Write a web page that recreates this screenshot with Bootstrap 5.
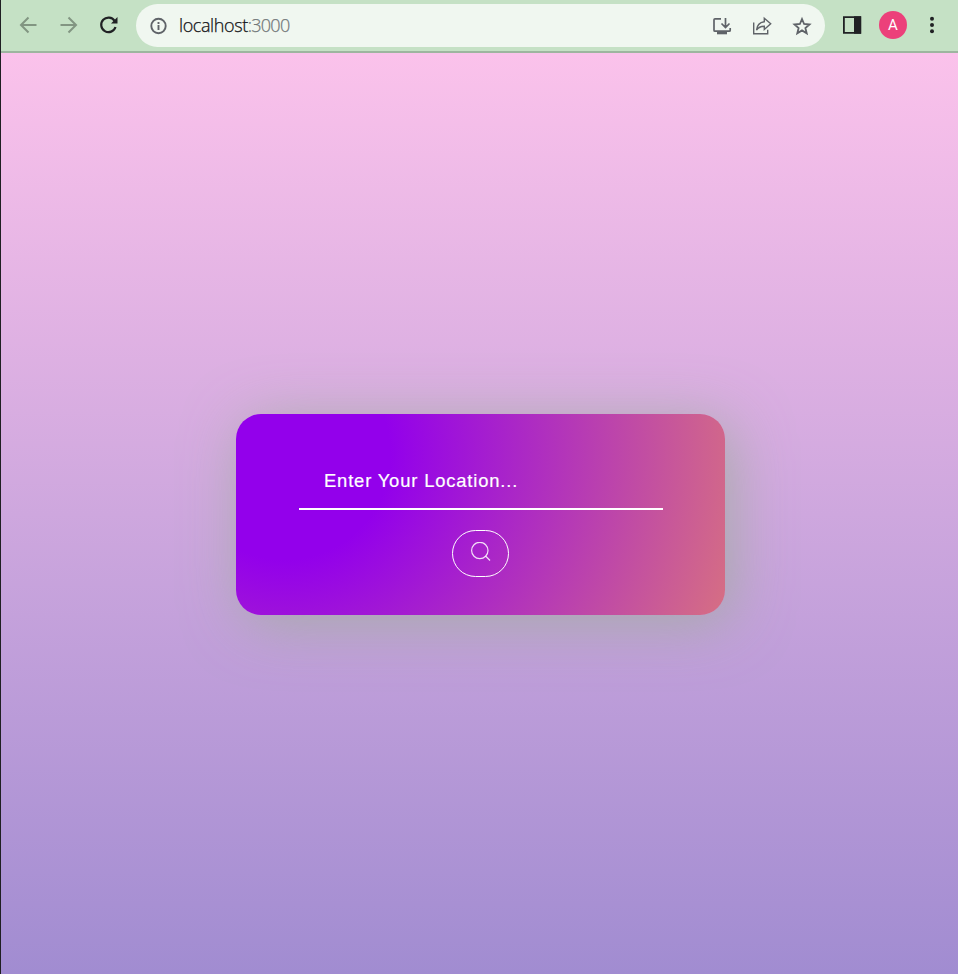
<!DOCTYPE html>
<html lang="en">
<head>
<meta charset="utf-8">
<meta name="viewport" content="width=device-width, initial-scale=1">
<title>Weather</title>
<link href="https://cdn.jsdelivr.net/npm/bootstrap@5.3.0/dist/css/bootstrap.min.css" rel="stylesheet">
<style>
body { border-left: 1px solid #1f1f22; background: #a18cd1; }
.toolbar { height: 53px; flex: none; background: #c5e1c5; border-bottom: 2px solid #9db59f; padding: 3px 14px 4px 15px; }
.tool { width: 24px; height: 24px; flex: none; display: block; }
.tool-gap { gap: 16px; }
.omnibox { height: 43px; margin: 1px 15px 0 16px; padding: 0 11px; background: #f0f7f0; border-radius: 22px; }
.address { font: 300 18px/24px "Open Sans", sans-serif; letter-spacing: -.4px; color: #101114; margin-left: 8px; margin-top: -1px; -webkit-text-stroke: .25px; }
.address span { color: #72777a; letter-spacing: -.75px; }
.avatar { width: 28px; height: 28px; background: #ec407a; font: 15px Roboto, sans-serif; margin-left: 15px; margin-right: 13px; }
.page { background: linear-gradient(to top, #a18cd1 0%, #fbc2eb 100%); }
.search-box { width: 489px; height: 201px; padding: 36px 62px 0 63px; border-radius: 25px; margin-left: 2px; margin-top: 2px;
  background: radial-gradient(circle at 10% 20%, #9300eb 22.5%, #d66f83 100%);
  box-shadow: 7px 8px 57px rgba(154, 174, 150, .74); }
.location { height: 60px; padding: 3px 25px 0; border: 0; border-bottom: 2px solid #fff; border-radius: 0; background: transparent; color: #fff; font: 18.400px "Liberation Sans", Arial, sans-serif; letter-spacing: .83px; }
.location:focus { background: transparent; color: #fff; box-shadow: none; }
.location::placeholder { color: #fff; opacity: 1; -webkit-text-stroke: .2px #fff; }
.search-btn { width: 57px; height: 47px; margin-top: 20px; margin-right: 2px; border: 1px solid #fff; border-radius: 25px; padding: 0 0 3px 1px; }
</style>
<script src="https://cdn.jsdelivr.net/npm/bootstrap@5.3.0/dist/js/bootstrap.bundle.min.js"></script>
</head>
<body class="vh-100 d-flex flex-column overflow-hidden">
<header class="toolbar d-flex align-items-center">
  <div class="d-flex tool-gap">
    <svg class="tool" viewBox="0 0 24 24" fill="none" stroke="#829582" stroke-width="2"><path d="M20.500 12H5M12.500 4.500 5 12l7.500 7.500"/></svg>
    <svg class="tool" viewBox="0 0 24 24" fill="none" stroke="#829582" stroke-width="2"><path d="M4.500 12H20M12.500 4.500 20 12l-7.500 7.500"/></svg>
    <svg class="tool" viewBox="0 0 24 24"><path d="M18.600 7.800A7.300 7.300 0 1 0 19.500 14" fill="none" stroke="#202124" stroke-width="2.200"/><path d="M21.500 4v6.500H15z" fill="#202124"/></svg>
  </div>
  <div class="omnibox flex-grow-1 d-flex align-items-center">
    <svg class="tool" viewBox="0 0 24 24" fill="none" stroke="#5f6368" stroke-width="1.900"><circle cx="11.500" cy="12" r="7.200"/><path d="M11.500 11v5M11.500 8v2"/></svg>
    <div class="address">localhost<span>:3000</span></div>
    <div class="d-flex tool-gap ms-auto">
      <svg class="tool" viewBox="0 0 24 24" fill="none" stroke="#5f6368" stroke-width="1.700"><path d="M11 4.800H5q-1 0-1 1v10.400q0 1 1 1h14.200q1 0 1-1V14M15.500 4v9M11.500 9.500l4 4 4-4"/><path d="M7 17h10v3.300H7z" fill="#5f6368" stroke="none"/></svg>
      <svg class="tool" viewBox="0 0 24 24" fill="none" stroke="#5f6368" stroke-width="1.400"><path d="M3.700 8.500v11.300h14v-4M14.300 4.200l6.400 5.600-6.400 5.700v-3.300c-3 0-5.500.6-7.800 3.800.6-5 3.500-7.700 7.800-8.300z"/></svg>
      <svg class="tool" viewBox="0 0 24 24" fill="none" stroke="#5f6368" stroke-width="1.800"><path d="m12 5 2.100 5 5.400.5-4.100 3.500 1.300 5.300-4.700-2.900-4.700 2.900L8.600 14l-4.100-3.500 5.400-.5z"/></svg>
    </div>
  </div>
  <svg class="tool" viewBox="0 0 24 24"><path d="M3.900 4.200h16.400v15.600H3.900z" fill="none" stroke="#202124" stroke-width="1.800"/><path d="M14 3.300h7.100v17.400H14z" fill="#202124"/></svg>
  <div class="avatar rounded-circle text-white d-flex align-items-center justify-content-center flex-shrink-0">A</div>
  <svg class="tool" viewBox="0 0 24 24" fill="#202124"><circle cx="12" cy="5.700" r="2"/><circle cx="12" cy="12" r="2"/><circle cx="12" cy="18.300" r="2"/></svg>
</header>
<main class="page flex-grow-1 d-flex align-items-center justify-content-center">
  <form class="search-box d-flex flex-column align-items-center">
    <input class="location form-control" type="text" placeholder="Enter Your Location..." aria-label="Location">
    <button class="search-btn btn d-flex align-items-center justify-content-center" type="button" aria-label="Search">
      <svg width="20" height="20" viewBox="0 0 20 20" fill="none" stroke="#fff" stroke-opacity=".85" stroke-width="1.200"><circle cx="8.800" cy="8.500" r="8.200"/><path d="m14.500 14 4.500 4.500"/></svg>
    </button>
  </form>
</main>
</body>
</html>
